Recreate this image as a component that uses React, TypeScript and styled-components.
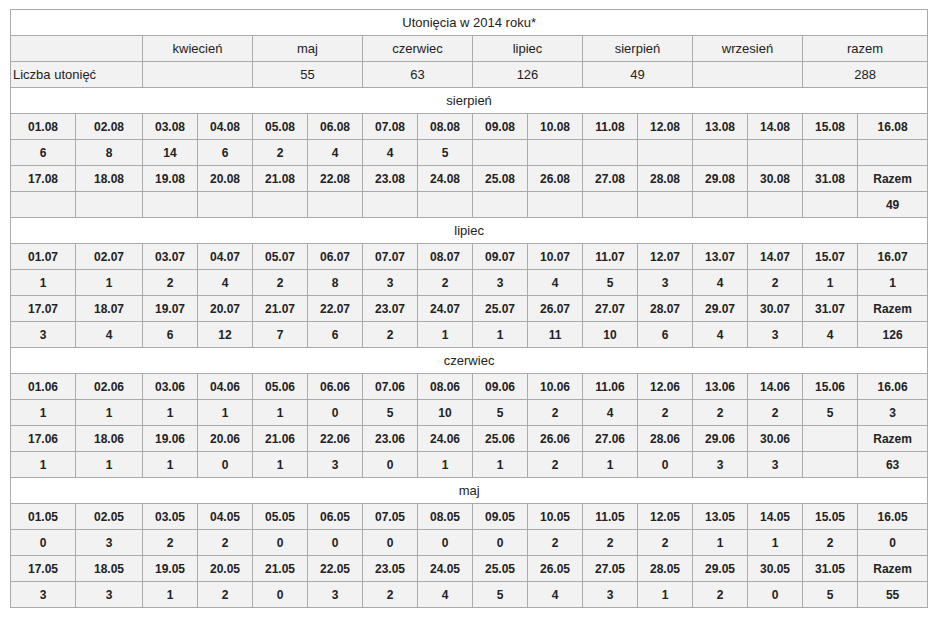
import styled, { createGlobalStyle } from 'styled-components';

const GlobalStyle = createGlobalStyle`
  body {
    margin: 0;
    background: #ffffff;
    font-family: "Liberation Sans", Arial, sans-serif;
    color: #222222;
  }
`;

interface Month {
  name: string;
  rows: string[][];
}

const days = (from: number, to: number, m: string) =>
  Array.from({ length: to - from + 1 }, (_, i) => `${String(from + i).padStart(2, '0')}.${m}`);

const empty = (n: number) => Array.from({ length: n }, () => '');

const months: Month[] = [
  {
    name: 'sierpień',
    rows: [
      days(1, 16, '08'),
      ['6', '8', '14', '6', '2', '4', '4', '5', ...empty(8)],
      [...days(17, 31, '08'), 'Razem'],
      [...empty(15), '49'],
    ],
  },
  {
    name: 'lipiec',
    rows: [
      days(1, 16, '07'),
      ['1', '1', '2', '4', '2', '8', '3', '2', '3', '4', '5', '3', '4', '2', '1', '1'],
      [...days(17, 31, '07'), 'Razem'],
      ['3', '4', '6', '12', '7', '6', '2', '1', '1', '11', '10', '6', '4', '3', '4', '126'],
    ],
  },
  {
    name: 'czerwiec',
    rows: [
      days(1, 16, '06'),
      ['1', '1', '1', '1', '1', '0', '5', '10', '5', '2', '4', '2', '2', '2', '5', '3'],
      [...days(17, 30, '06'), '', 'Razem'],
      ['1', '1', '1', '0', '1', '3', '0', '1', '1', '2', '1', '0', '3', '3', '', '63'],
    ],
  },
  {
    name: 'maj',
    rows: [
      days(1, 16, '05'),
      ['0', '3', '2', '2', '0', '0', '0', '0', '0', '2', '2', '2', '1', '1', '2', '0'],
      [...days(17, 31, '05'), 'Razem'],
      ['3', '3', '1', '2', '0', '3', '2', '4', '5', '4', '3', '1', '2', '0', '5', '55'],
    ],
  },
];

const colWidths = [65, 67, ...Array.from({ length: 13 }, () => 55), 70];

const summary = [
  { label: 'kwiecień', value: '' },
  { label: 'maj', value: '55' },
  { label: 'czerwiec', value: '63' },
  { label: 'lipiec', value: '126' },
  { label: 'sierpień', value: '49' },
  { label: 'wrzesień', value: '' },
  { label: 'razem', value: '288' },
];

const App = () => {
  return (
    <Page>
      <GlobalStyle />
      <Table>
        <colgroup>
          {colWidths.map((w, i) => (
            <col key={i} style={{ width: w }} />
          ))}
        </colgroup>
        <tbody>
          <tr>
            <Cell colSpan={16} $plain>
              Utonięcia w 2014 roku*
            </Cell>
          </tr>
          <tr>
            <Cell colSpan={2} />
            {summary.map((s) => (
              <Cell key={s.label} colSpan={2}>
                {s.label}
              </Cell>
            ))}
          </tr>
          <tr>
            <Cell colSpan={2} $left>
              Liczba utonięć
            </Cell>
            {summary.map((s) => (
              <Cell key={s.label} colSpan={2}>
                {s.value}
              </Cell>
            ))}
          </tr>
          {months.map((m) => (
            <MonthBlock key={m.name} month={m} />
          ))}
        </tbody>
      </Table>
    </Page>
  );
};

const MonthBlock = ({ month }: { month: Month }) => (
  <>
    <tr>
      <Cell colSpan={16} $plain>
        {month.name}
      </Cell>
    </tr>
    {month.rows.map((row, ri) => (
      <tr key={ri}>
        {row.map((v, ci) => (
          <Cell key={ci} $bold>
            {v}
          </Cell>
        ))}
      </tr>
    ))}
  </>
);

const Page = styled.div`
  padding: 9px 10px;
`;

const Table = styled.table`
  width: 917px;
  table-layout: fixed;
  border-collapse: collapse;
  line-height: 15px;
`;

const Cell = styled.td<{ $plain?: boolean; $bold?: boolean; $left?: boolean }>`
  height: ${({ $bold }) => ($bold ? '23px' : '25px')};
  padding: ${({ $bold }) => ($bold ? '2px 2px 0' : '0 2px')};
  border: 1px solid #aaaaaa;
  background: ${({ $plain }) => ($plain ? '#ffffff' : '#f2f2f2')};
  font-size: ${({ $bold }) => ($bold ? '12px' : '13px')};
  font-weight: ${({ $bold }) => ($bold ? 700 : 400)};
  text-align: ${({ $left }) => ($left ? 'left' : 'center')};
  vertical-align: middle;
  white-space: nowrap;
`;

export default App;
